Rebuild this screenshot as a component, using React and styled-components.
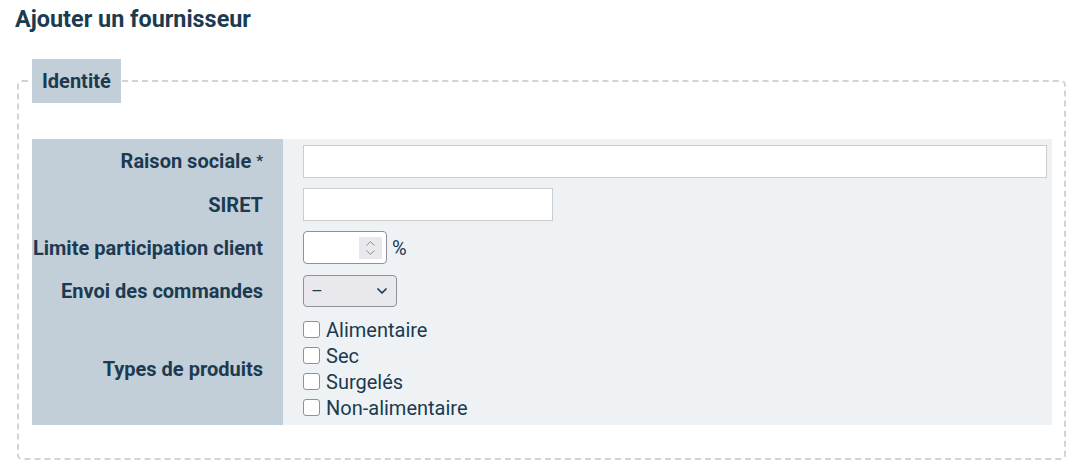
import styled, { createGlobalStyle } from 'styled-components';
import { ChevronDown, ChevronUp } from 'lucide-react';

const GlobalStyle = createGlobalStyle`
    body {
        margin: 0;
        font-family: Roboto, "Liberation Sans", sans-serif;
        color: #1c3a50;
        background: #ffffff;
    }
`;

const Page = styled.div`
    padding: 4px 12px 10px 15px;
`;

const Title = styled.h1`
    margin: 0 0 25px 0;
    font-size: 23.4px;
    font-weight: 700;
    line-height: 30px;
`;

const Fieldset = styled.fieldset`
    margin: 0 0 0 2px;
    padding: 36px 12px 33px 13px;
    border: 2px dashed #d3d3d3;
    border-radius: 5px;
    min-width: 0;
`;

const Legend = styled.legend`
    background: #c2cfd8;
    padding: 0 10px;
    height: 44px;
    line-height: 44px;
    font-size: 20px;
    font-weight: 700;
    margin-left: 0;
`;

const Table = styled.div`
    display: grid;
    grid-template-columns: 251px 1fr;
`;

const Label = styled.div`
    background: #c2cfd8;
    display: flex;
    align-items: center;
    justify-content: flex-end;
    padding: 0 20px 0 0;
    height: ${p => p.$h || 43}px;
    font-size: 20px;
    font-weight: 700;
    white-space: nowrap;
`;

const Req = styled.span`
    font-size: 15px;
    margin-left: 5px;
`;

const Cell = styled.div`
    background: #eef2f5;
    display: flex;
    align-items: ${p => (p.$stack ? 'stretch' : 'center')};
    flex-direction: ${p => (p.$stack ? 'column' : 'row')};
    justify-content: ${p => (p.$stack ? 'center' : 'flex-start')};
    padding: 0 5px 0 20px;
    height: ${p => p.$h || 43}px;
    gap: 5px;
`;

const TextInput = styled.input`
    box-sizing: border-box;
    height: 33px;
    width: ${p => p.$w || '100%'};
    border: 1px solid #cccccc;
    background: #ffffff;
    font: inherit;
    font-size: 18px;
    padding: 0 8px;
    outline: none;
`;

const NumberBox = styled.div`
    box-sizing: border-box;
    width: 84px;
    height: 33px;
    border: 1px solid #8f8f9d;
    border-radius: 4px;
    background: #ffffff;
    display: flex;
    align-items: center;
    padding: 0 4px 0 0;
`;

const BareInput = styled.input`
    flex: 1;
    min-width: 0;
    border: none;
    outline: none;
    background: transparent;
    font: inherit;
    font-size: 18px;
    padding: 0 6px;
`;

const Spinner = styled.div`
    width: 23px;
    height: 22px;
    background: #e9e9ed;
    display: flex;
    flex-direction: column;
    align-items: center;
    justify-content: center;
    color: #8a8a96;
    svg { margin: -3px 0; }
`;

const Unit = styled.span`
    font-size: 20px;
`;

const SelectBox = styled.div`
    position: relative;
    width: 94px;
    height: 32px;
`;

const Select = styled.select`
    appearance: none;
    box-sizing: border-box;
    width: 100%;
    height: 100%;
    border: 1px solid #8f8f9d;
    border-radius: 4px;
    background: #e9e9ed;
    font: inherit;
    font-size: 18px;
    color: #1c3a50;
    padding: 0 7px;
`;

const SelectArrow = styled.span`
    position: absolute;
    right: 7px;
    top: 8px;
    pointer-events: none;
    display: flex;
    color: #1c3a50;
`;

const CheckRow = styled.label`
    display: flex;
    align-items: center;
    height: 26px;
    font-size: 20px;
    gap: 6px;
`;

const Check = styled.input`
    appearance: none;
    margin: 0;
    width: 17px;
    height: 17px;
    border: 1px solid #8f8f9d;
    border-radius: 3px;
    background: #ffffff;
`;

const types = ['Alimentaire', 'Sec', 'Surgelés', 'Non-alimentaire'];

function App() {
    return (
        <Page>
            <GlobalStyle />
            <Title>Ajouter un fournisseur</Title>
            <Fieldset>
                <Legend>Identité</Legend>
                <Table>
                    <Label $h={44}>Raison sociale<Req>*</Req></Label>
                    <Cell $h={44}><TextInput /></Cell>

                    <Label>SIRET</Label>
                    <Cell><TextInput $w="250px" /></Cell>

                    <Label>Limite participation client</Label>
                    <Cell>
                        <NumberBox>
                            <BareInput />
                            <Spinner>
                                <ChevronUp size={15} strokeWidth={1.6} />
                                <ChevronDown size={15} strokeWidth={1.6} />
                            </Spinner>
                        </NumberBox>
                        <Unit>%</Unit>
                    </Cell>

                    <Label>Envoi des commandes</Label>
                    <Cell>
                        <SelectBox>
                            <Select defaultValue="">
                                <option value="">–</option>
                            </Select>
                            <SelectArrow><ChevronDown size={16} strokeWidth={2.6} /></SelectArrow>
                        </SelectBox>
                    </Cell>

                    <Label $h={113}>Types de produits</Label>
                    <Cell $h={113} $stack>
                        <div>
                            {types.map(t => (
                                <CheckRow key={t}>
                                    <Check type="checkbox" />
                                    {t}
                                </CheckRow>
                            ))}
                        </div>
                    </Cell>
                </Table>
            </Fieldset>
        </Page>
    );
}

export default App;
